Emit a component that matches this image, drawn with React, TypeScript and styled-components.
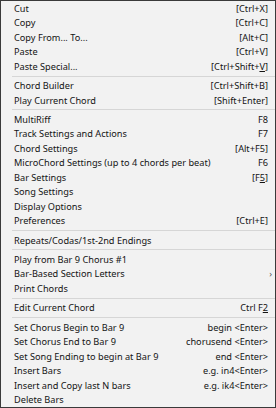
import styled, { createGlobalStyle } from "styled-components";

const GlobalStyle = createGlobalStyle`
  html, body {
    margin: 0;
    padding: 0;
    background: #f2f2f2;
  }
`;

type Entry = { label?: string; keys?: React.ReactNode; sub?: boolean; sep?: boolean };

const u = (s: string) => <u>{s}</u>;

const entries: Entry[] = [
  { label: "Cut", keys: "[Ctrl+X]" },
  { label: "Copy", keys: "[Ctrl+C]" },
  { label: "Copy From... To...", keys: "[Alt+C]" },
  { label: "Paste", keys: "[Ctrl+V]" },
  { label: "Paste Special...", keys: <>[Ctrl+Shift+{u("V")}]</> },
  { sep: true },
  { label: "Chord Builder", keys: "[Ctrl+Shift+B]" },
  { label: "Play Current Chord", keys: "[Shift+Enter]" },
  { sep: true },
  { label: "MultiRiff", keys: "F8" },
  { label: "Track Settings and Actions", keys: "F7" },
  { label: "Chord Settings", keys: "[Alt+F5]" },
  { label: "MicroChord Settings (up to 4 chords per beat)", keys: "F6" },
  { label: "Bar Settings", keys: <>[F{u("5")}]</> },
  { label: "Song Settings" },
  { label: "Display Options" },
  { label: "Preferences", keys: "[Ctrl+E]" },
  { sep: true },
  { label: "Repeats/Codas/1st-2nd Endings" },
  { sep: true },
  { label: "Play from Bar 9 Chorus #1" },
  { label: "Bar-Based Section Letters", sub: true },
  { label: "Print Chords" },
  { sep: true },
  { label: "Edit Current Chord", keys: <>Ctrl F{u("2")}</> },
  { sep: true },
  { label: "Set Chorus Begin to Bar 9", keys: "begin <Enter>" },
  { label: "Set Chorus End to Bar 9", keys: "chorusend <Enter>" },
  { label: "Set Song Ending to begin at Bar 9", keys: "end <Enter>" },
  { label: "Insert Bars", keys: "e.g. in4<Enter>" },
  { label: "Insert and Copy last N bars", keys: "e.g. ik4<Enter>" },
  { label: "Delete Bars" },
];

const Menu = styled.div`
  box-sizing: border-box;
  width: 276px;
  height: 408px;
  border: 1px solid #3a3a3a;
  background: #f2f2f2;
  font-family: "Noto Sans", "Open Sans", sans-serif;
  font-size: 9.2px;
  color: #141414;
  overflow: hidden;
`;

const Item = styled.div`
  display: flex;
  align-items: center;
  justify-content: space-between;
  height: 14.5px;
  padding: 0 7px 0 13px;
  white-space: nowrap;

  u {
    text-decoration-thickness: 1px;
    text-underline-offset: 1px;
  }
`;

const Keys = styled.span`
  text-align: right;
`;

const Arrow = styled.span`
  font-size: 9px;
  color: #555;
  margin-right: -4px;
`;

const Separator = styled.div`
  height: 1px;
  margin: 2px 0 1.8px 11px;
  background: #d6d6d6;
`;

export default function App() {
  return (
    <>
      <GlobalStyle />
      <Menu>
        {entries.map((e, i) =>
          e.sep ? (
            <Separator key={i} />
          ) : (
            <Item key={i}>
              <span>{e.label}</span>
              {e.sub ? <Arrow>&#x203A;</Arrow> : <Keys>{e.keys}</Keys>}
            </Item>
          )
        )}
      </Menu>
    </>
  );
}
